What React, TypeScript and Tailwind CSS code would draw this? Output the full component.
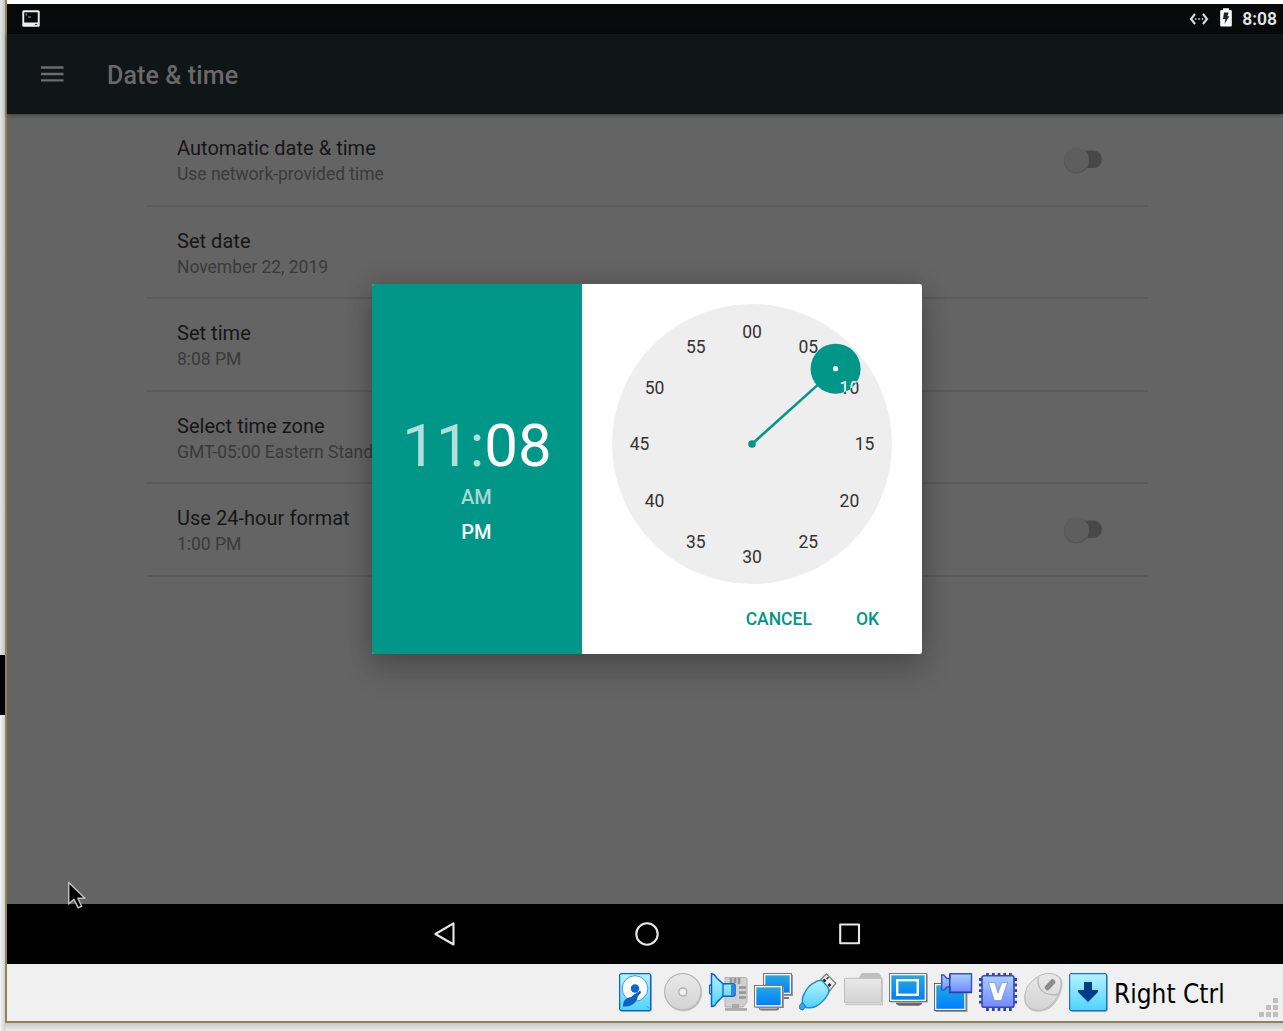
import React from "react";

const settings = [
  { title: "Automatic date & time", summary: "Use network-provided time", toggle: true },
  { title: "Set date", summary: "November 22, 2019", toggle: false },
  { title: "Set time", summary: "8:08 PM", toggle: false },
  { title: "Select time zone", summary: "GMT-05:00 Eastern Stand", toggle: false },
  { title: "Use 24-hour format", summary: "1:00 PM", toggle: true },
];

const minutes = ["00", "05", "10", "15", "20", "25", "30", "35", "40", "45", "50", "55"];

function Toggle() {
  return (
    <svg width="44" height="32" viewBox="0 0 44 32" className="mr-[43px] shrink-0">
      <rect x="8" y="6.5" width="33" height="17.5" rx="8.75" fill="#484848" />
      <circle cx="15.5" cy="16.8" r="12.7" fill="#555" />
      <circle cx="15.5" cy="15.8" r="12.4" fill="#5e5e5e" />
    </svg>
  );
}

function StatusBar() {
  return (
    <div className="flex h-[30px] items-center bg-[#08090b] pl-[15px] pr-[6px]">
      <svg width="18" height="17" viewBox="0 0 18 17" className="-mt-px">
        <rect x="0.3" y="0.3" width="17.4" height="16.4" rx="1.5" fill="#eee" />
        <rect x="2.2" y="2.2" width="13.6" height="10.3" rx="0.5" fill="#08090b" />
        <path d="M4.2 3.2v2.5M6 7h3" stroke="#999" fill="none" />
        <path d="M13 14.6h2.2" stroke="#333" />
      </svg>
      <div className="ml-auto flex items-center">
        <svg width="20" height="14" viewBox="0 0 20 14" className="-mt-px">
          <path d="M6 2L2 7l4 5M14 2l4 5-4 5" stroke="#ddd" strokeWidth="2.1" fill="none" />
          <path d="M5.8 7h1.6M9.2 7h1.6M12.6 7h1.6" stroke="#ddd" strokeWidth="1.5" />
        </svg>
        <svg width="12" height="19" viewBox="0 0 12 19" className="-mt-[3px] ml-[11px]">
          <path d="M1.2 2H3V0.2h6V2h1.8q1 0 1 1v14.6q0 1-1 1H1.2q-1 0-1-1V3q0-1 1-1z" fill="#fff" />
          <path d="M4 4.5h4.6L7.4 8.3h2L4.4 16l1-5H3z" fill="#222" />
        </svg>
        <span className="ml-[10px] text-[17.5px] leading-[30px] font-semibold text-[#e4e4e4]">8:08</span>
      </div>
    </div>
  );
}

function AppBar() {
  return (
    <div className="relative flex h-20 items-center bg-[#101517] pl-[34px] shadow-[0_1px_4px_rgba(0,0,0,0.4)]">
      <svg width="23" height="16" viewBox="0 0 23 16">
        <path d="M0 1.5h22.6M0 8h22.6M0 14.4h22.6" stroke="#696b6c" strokeWidth="2.4" />
      </svg>
      <h1 className="ml-[43px] pt-[4px] text-[25px] leading-[30px] font-medium tracking-[0.12px] text-[#696969]">Date &amp; time</h1>
    </div>
  );
}

function Dial() {
  const ring = (color: string) =>
    minutes.map((m, i) => (
      <text
        key={m}
        x={140 + 112.5 * Math.sin((i * Math.PI) / 6)}
        y={146.3 - 112.5 * Math.cos((i * Math.PI) / 6)}
        textAnchor="middle"
        fontSize="17.5"
        fill={color}
      >
        {m}
      </text>
    ));
  return (
    <svg width="280" height="280" viewBox="0 0 280 280" className="mx-auto mt-5 shrink-0">
      <defs>
        <clipPath id="selector">
          <circle cx="223.6" cy="64.7" r="25" />
        </clipPath>
      </defs>
      <circle cx="140" cy="140" r="140" fill="#eee" />
      {ring("#333")}
      <path d="M140 140L206 80.6" stroke="#009688" strokeWidth="2.5" />
      <circle cx="140" cy="140" r="3.8" fill="#009688" />
      <circle cx="223.6" cy="64.7" r="25" fill="#009688" />
      <circle cx="223.6" cy="64.7" r="2.6" fill="#fff" />
      <g clipPath="url(#selector)">{ring("#fff").slice(2, 3)}</g>
    </svg>
  );
}

function TimeDialog() {
  return (
    <div className="absolute top-[284px] left-[365px] flex h-[370px] w-[550px] overflow-hidden rounded-[2.5px] bg-white shadow-[0_18px_30px_rgba(0,0,0,0.18),0_0_26px_rgba(0,0,0,0.18)]">
      <div className="flex w-[210px] flex-col items-center bg-[#009688] pt-[126px] text-white">
        <div className="pt-px text-[60px] leading-[69px]">
          <span className="text-[#b2dfdb]">11:</span>
          <span>08</span>
        </div>
        <div className="mr-px text-[20px] leading-[35px] font-medium text-[#a6d9d4]">AM</div>
        <div className="mr-px text-[20px] leading-[35px] font-medium">PM</div>
      </div>
      <div className="flex w-[340px] flex-col">
        <Dial />
        <div className="flex justify-end gap-[44px] pt-[23px] pr-[43px] text-[17.5px] leading-[24px] font-medium text-[#009688]">
          <span>CANCEL</span>
          <span>OK</span>
        </div>
      </div>
    </div>
  );
}

function NavBar() {
  return (
    <div className="flex h-[60px] items-center justify-center gap-[178px] bg-black pl-1">
      <svg width="24" height="26" viewBox="0 0 24 26" fill="none" stroke="#e8e8e8" strokeWidth="2.1" strokeLinejoin="round">
        <path d="M21.5 2.3v21.2L3.4 13z" />
      </svg>
      <svg width="26" height="26" viewBox="0 0 26 26" fill="none" stroke="#e8e8e8" strokeWidth="2.1">
        <circle cx="13" cy="13" r="10.7" />
      </svg>
      <svg width="24" height="26" viewBox="0 0 24 26" fill="none" stroke="#e8e8e8" strokeWidth="2.1" strokeLinejoin="round">
        <rect x="2.2" y="3.5" width="18.8" height="18.8" />
      </svg>
    </div>
  );
}

function Icon({ children }: { children: React.ReactNode }) {
  return (
    <svg width="39" height="40" viewBox="0 0 39 40" className="mr-[6px] shrink-0">
      {children}
    </svg>
  );
}

function VmBar() {
  return (
    <div className="flex h-[57px] items-start bg-[#f0f0f0] pt-[9px] pl-[612px] text-black">
      <svg width="0" height="0" className="absolute">
        <defs>
          <linearGradient id="cyan" x2="0" y2="1">
            <stop stopColor="#b4f4ff" />
            <stop offset="1" stopColor="#50d2ff" />
          </linearGradient>
          <linearGradient id="screen" x2="0" y2="1">
            <stop stopColor="#25a8e0" />
            <stop offset="1" stopColor="#0080ff" />
          </linearGradient>
          <linearGradient id="violet" x2="0" y2="1">
            <stop stopColor="#a8d0ff" />
            <stop offset="1" stopColor="#7388ff" />
          </linearGradient>
          <linearGradient id="grey" x2="0" y2="1">
            <stop stopColor="#e9e9e9" />
            <stop offset="1" stopColor="#d3d3d3" />
          </linearGradient>
        </defs>
      </svg>
      <Icon>
        <rect x="1" y="1.3" width="32" height="37.5" rx="2" fill="#aaa" />
        <rect x="0.6" y="0.6" width="31" height="37" rx="2" fill="url(#cyan)" stroke="#0b62cf" strokeWidth="1.2" />
        <circle cx="16" cy="15.5" r="12.8" fill="#fff" stroke="#4595df" />
        <circle cx="16" cy="15.5" r="4.2" fill="#0b68cf" />
        <path d="M21 17.8q2 1.5 0 3.2-2.5 1.5-3 6Q13 34.5 4 33.5q-.5-7 6-9 3-.5 5-3z" fill="#0a62c6" />
        <path d="M28.2 33.5l1 1" stroke="#0b62cf" />
      </Icon>
      <Icon>
        <circle cx="19.5" cy="19.7" r="18.7" fill="#c8c8c8" />
        <circle cx="18.8" cy="18.8" r="18.2" fill="url(#grey)" stroke="#b5b5b5" strokeWidth="1.2" />
        <circle cx="18.8" cy="19" r="4" fill="#f0f0f0" stroke="#b5b5b5" strokeWidth="1.6" />
      </Icon>
      <Icon>
        <path d="M16 4.5h20q2 0 2 2V29l-4 5H16z" fill="#cfcfcf" stroke="#b0b0b0" />
        <path d="M22 5v5M26 5v5M30 5v6M30 14.5h7M30 19.5h7M30 24.5h7" stroke="#949494" strokeWidth="2.6" />
        <rect x="23" y="31" width="7" height="5" fill="#aaa" />
        <rect x="16" y="35" width="22" height="2.8" fill="#aaa" />
        <path
          d="M2.5 0.7q3 .3 5 4l6.5 6h10q2 0 2 2v8.5q0 2-2 2h-10L7.5 29.7Q6 33.4 2.5 33.5z"
          fill="url(#cyan)"
          stroke="#0a62cc"
          strokeWidth="1.5"
        />
        <path d="M2.5 12H1Q.6 12 .6 13v7q0 1 1 1h1M14 11v12" fill="none" stroke="#0a62cc" strokeWidth="1.3" />
        <rect x="22" y="11.5" width="3" height="11" fill="#318ae2" />
      </Icon>
      <Icon>
        <rect x="11" y="2" width="28" height="21" fill="#999" />
        <path d="M26 24h9v2h-9z" fill="#777" />
        <rect x="9.5" y="0.5" width="28" height="21" fill="#fff" stroke="#777" />
        <rect x="11.3" y="2.3" width="24.4" height="17.4" fill="url(#screen)" />
        <path d="M5 34h20v2.5l-2 1H7l-2-1z" fill="#777" />
        <path d="M6 34h17v1.5H6z" fill="#eee" />
        <rect x="2" y="14" width="28" height="21" fill="#999" />
        <rect x="0.5" y="12.5" width="28" height="21.5" fill="#fff" stroke="#777" />
        <rect x="2.3" y="14.3" width="24.4" height="17.9" fill="url(#screen)" />
      </Icon>
      <Icon>
        <path d="M27.5 .8l9.3 9.6L28.5 20.5 18.8 9.2z" fill="#eee" stroke="#777" strokeWidth="1.2" />
        <path d="M24.3 6.5l2.3 2M29.5 11l2 2M28 4.7l1 1" stroke="#222" strokeWidth="2.6" />
        <path
          d="M16 9.4Q22 4.5 27 12q4.5 4 2 9Q24 30 16.5 33.5q-5 2.3-10 .7L4 31Q2.2 26 5 21.5 9 12 16 9.4z"
          fill="url(#cyan)"
          stroke="#2488d3"
          strokeWidth="1.5"
        />
        <path d="M1 32l2-2.5 2 2 1.5 2L4 37l-3-1-1-2z" fill="#32a5e6" stroke="#1879cc" />
      </Icon>
      <Icon>
        <path d="M1.5 31.5H38.7V7L36 4" fill="none" stroke="#c8c8c8" strokeWidth="1.5" />
        <path d="M14.5 5L17 1q.4-1 1.5-1H34q1 0 1.8 1L38 5z" fill="#bfbfbf" />
        <rect x="0.5" y="5.3" width="37" height="24.5" rx="0.8" fill="url(#grey)" stroke="#bdbdbd" />
      </Icon>
      <Icon>
        <path d="M7 29.5h26V31l-3 1.7H10L7 31z" fill="#686868" />
        <rect x="1.5" y="1.5" width="37.5" height="28" fill="#aaa" />
        <rect x="0.5" y="0.5" width="37" height="28" fill="#fff" stroke="#777" />
        <rect x="2.3" y="2.3" width="33.4" height="24.4" fill="url(#screen)" />
        <rect x="8.2" y="7.2" width="20.6" height="14.6" fill="none" stroke="#fff" strokeWidth="2.4" />
      </Icon>
      <Icon>
        <rect x="1.5" y="11.5" width="32" height="27.5" fill="#999" />
        <rect x="0.5" y="10.5" width="31.5" height="27" fill="#fff" stroke="#666" />
        <rect x="2.3" y="12.3" width="28" height="23.5" fill="url(#screen)" />
        <path d="M7.7 2h2L13 5.5h3V.7h21.5v18.6H16V14h-3l-3.300 3h-2z" fill="url(#violet)" stroke="#3453c6" strokeWidth="1.4" />
        <path d="M15.7 1v18.5h22" stroke="#2641aa" strokeWidth="1.4" fill="none" />
      </Icon>
      <Icon>
        <path d="M8.5 0v38M14.3 0v38M20 0v38M25.7 0v38M31.4 0v38" stroke="#2d42ad" strokeWidth="2.8" />
        <path d="M0 6.5h38M0 12h38M0 17.7h38M0 23.4h38M0 29.2h38" stroke="#2d42ad" strokeWidth="2.8" />
        <rect x="3" y="2.7" width="32" height="31.5" rx="2" fill="url(#violet)" stroke="#3448b8" strokeWidth="1.6" />
        <path d="M9.5 9.500h6.300L19 20l3.700-10.500h5.800L22.300 27.500h-7z" fill="#fff" stroke="#6377d8" strokeWidth=".6" />
      </Icon>
      <Icon>
        <path d="M3 15Q12 3 22 1q12-2 16 6 2 7-3 17-7 14-18 14.5Q5 40 1 30q-2-8 2-15z" fill="#c5c5c5" />
        <path d="M3 14Q12 2 22 .6q11-1 14.5 5.8 2 7-3 17Q27 36 16 37.3 5 38 1.3 29.5-.5 22 3 14z" fill="url(#grey)" stroke="#b9b9b9" />
        <path d="M14 4Q13 16 21 20q7 3 13.5.8" fill="none" stroke="#b7b7b7" strokeWidth="1.3" />
        <path d="M23.5 14.5l5-5.5" stroke="#8c8c8c" strokeWidth="5.5" strokeLinecap="round" />
      </Icon>
      <Icon>
        <rect x="1.5" y="1.5" width="37.3" height="37.3" rx="2" fill="#999" />
        <rect x="0.6" y="0.6" width="37" height="37" rx="2" fill="url(#cyan)" stroke="#1675ce" strokeWidth="1.2" />
        <path d="M15 9h8v8h6v2L19 29 9 19v-2h6z" fill="#003b87" />
      </Icon>
      <span className="w-[139px] pt-[4px] font-['DejaVu_Sans_Condensed','DejaVu_Sans'] text-[26px] leading-[34px] font-normal whitespace-nowrap [font-stretch:condensed]">
        Right Ctrl
      </span>
      <svg width="20" height="20" viewBox="0 0 20 20" className="mt-[25px] ml-[6px] shrink-0" fill="#bfbfbf">
        <path d="M14 0h5v5h-5zM7 7h5v5H7zM14 7h5v5h-5zM0 14h5v5H0zM7 14h5v5H7zM14 14h5v5h-5z" />
      </svg>
    </div>
  );
}

function Pointer() {
  return (
    <svg width="22" height="32" viewBox="0 0 22 32" className="absolute top-[880px] left-[60px]">
      <path
        d="M1.7 2.4v21.5l5.3-4.5 4.2 8.4 3.4-1.5-3.8-8.1h7.1z"
        fill="#000"
        stroke="#bcbcbc"
        strokeWidth="1.5"
        strokeLinejoin="round"
      />
    </svg>
  );
}

export default function App() {
  return (
    <div className="flex h-[1031px] w-[1283px] overflow-hidden bg-[#ececec] font-[Roboto,sans-serif]">
      <div className="flex w-[5px] shrink-0 flex-col">
        <div className="h-[655px] bg-linear-to-r from-[#e6e6e6] to-[#c4c4c4]" />
        <div className="h-[60px] bg-black" />
        <div className="flex-1 bg-linear-to-r from-[#f4f4f4] to-[#d2d2d2]" />
      </div>
      <div className="flex min-w-0 flex-1 flex-col">
        <div className="relative flex h-[1023px] flex-col border-b-2 border-l-2 border-[#8f8254] bg-[#f0f0f0]">
          <div className="h-1 shrink-0 bg-white" />
          <StatusBar />
          <AppBar />
          <main className="h-[790px] bg-[#646464] pl-[140px]">
            {settings.map((item) => (
              <div
                key={item.title}
                className="flex h-[92.5px] w-[1001px] items-start justify-between border-b-2 border-[#5a5a5a] pl-[30px]"
              >
                <div className="pt-[21.2px]">
                  <div className="text-[20px] leading-[26px] tracking-[0.03px] text-[#161616]">{item.title}</div>
                  <div className="w-[220px] text-[17.5px] leading-[26px] tracking-[-0.03px] whitespace-nowrap text-[#3a3a3a]">
                    {item.summary}
                  </div>
                </div>
                {item.toggle && (
                  <div className="pt-[30px]">
                    <Toggle />
                  </div>
                )}
              </div>
            ))}
          </main>
          <NavBar />
          <VmBar />
          <TimeDialog />
          <Pointer />
        </div>
        <div className="h-2 bg-linear-to-b from-[#c9c9c9] to-[#ececec]" />
      </div>
    </div>
  );
}
